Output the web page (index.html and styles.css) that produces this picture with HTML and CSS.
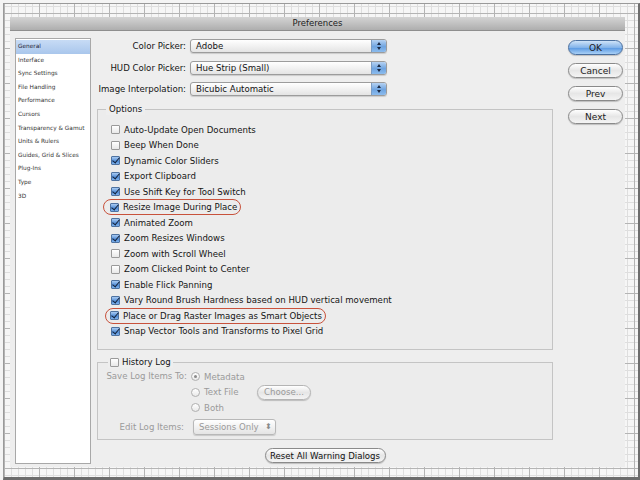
FILE: index.html
```html
<!DOCTYPE html>
<html>
<head>
<meta charset="utf-8">
<link rel="stylesheet" href="styles.css">
</head>
<body>
<div class="frame">
  <div class="dialog">
    <div class="titlebar">Preferences</div>
    <div class="body">
      <ul class="sidebar">
        <li class="sel">General</li>
        <li>Interface</li>
        <li>Sync Settings</li>
        <li>File Handling</li>
        <li>Performance</li>
        <li>Cursors</li>
        <li>Transparency &amp; Gamut</li>
        <li>Units &amp; Rulers</li>
        <li>Guides, Grid &amp; Slices</li>
        <li>Plug-Ins</li>
        <li>Type</li>
        <li>3D</li>
      </ul>
      <div class="main">
        <div class="pickers">
          <div class="prow"><span class="plabel">Color Picker:</span><span class="select">Adobe<span class="stepper"></span></span></div>
          <div class="prow"><span class="plabel">HUD Color Picker:</span><span class="select">Hue Strip (Small)<span class="stepper"></span></span></div>
          <div class="prow"><span class="plabel">Image Interpolation:</span><span class="select">Bicubic Automatic<span class="stepper"></span></span></div>
        </div>
        <div class="group options">
          <div class="legend">Options</div>
          <div class="crow"><span class="cb"></span>Auto-Update Open Documents</div>
          <div class="crow"><span class="cb"></span>Beep When Done</div>
          <div class="crow"><span class="cb on"></span>Dynamic Color Sliders</div>
          <div class="crow"><span class="cb on"></span>Export Clipboard</div>
          <div class="crow"><span class="cb on"></span>Use Shift Key for Tool Switch</div>
          <div class="crow"><span class="hl"><span class="cb on"></span>Resize Image During Place</span></div>
          <div class="crow"><span class="cb on"></span>Animated Zoom</div>
          <div class="crow"><span class="cb on"></span>Zoom Resizes Windows</div>
          <div class="crow"><span class="cb"></span>Zoom with Scroll Wheel</div>
          <div class="crow"><span class="cb"></span>Zoom Clicked Point to Center</div>
          <div class="crow"><span class="cb on"></span>Enable Flick Panning</div>
          <div class="crow"><span class="cb on"></span>Vary Round Brush Hardness based on HUD vertical movement</div>
          <div class="crow"><span class="hl hl2"><span class="cb on"></span>Place or Drag Raster Images as Smart Objects</span></div>
          <div class="crow"><span class="cb on"></span>Snap Vector Tools and Transforms to Pixel Grid</div>
        </div>
        <div class="group history">
          <div class="legend hlegend"><span class="cb"></span>History Log</div>
          <div class="hgrid">
            <span class="hlabel">Save Log Items To:</span>
            <div class="radios">
              <div class="rrow"><span class="radio on"></span>Metadata</div>
              <div class="rrow"><span class="radio"></span><span class="rtext">Text File</span><span class="btn small">Choose...</span></div>
              <div class="rrow"><span class="radio"></span>Both</div>
            </div>
            <span class="hlabel elabel">Edit Log Items:</span>
            <div class="erow"><span class="select dis">Sessions Only<span class="dstep">&#x2B0D;</span></span></div>
          </div>
        </div>
        <div class="reset-row"><span class="btn reset">Reset All Warning Dialogs</span></div>
      </div>
      <div class="buttons">
        <span class="btn big ok">OK</span>
        <span class="btn big">Cancel</span>
        <span class="btn big">Prev</span>
        <span class="btn big">Next</span>
      </div>
    </div>
  </div>
</div>
</body>
</html>
```

FILE: styles.css
```css
html, body {
  margin: 0;
  padding: 0;
}
body {
  width: 640px;
  height: 480px;
  background: #f4f4f4;
  font-family: "DejaVu Sans", sans-serif;
  color: #141414;
  overflow: hidden;
}
.frame {
  margin: 3px 0 0 3px;
  width: 622px;
  height: 456px;
  padding: 13px 6px 4px 6px;
  border-left: 1px solid #9a9a9a;
  border-top: 1px solid #9a9a9a;
  border-right: 2px solid #6d6d6d;
  border-bottom: 3px solid #6d6d6d;
  background-color: #f6f6f6;
  background-image:
    linear-gradient(to right, #b4b4b4 1px, transparent 1px),
    linear-gradient(to bottom, #b4b4b4 1px, transparent 1px),
    linear-gradient(to right, #dedede 1px, transparent 1px),
    linear-gradient(to bottom, #dedede 1px, transparent 1px);
  background-size: 35px 35px, 35px 35px, 7px 7px, 7px 7px;
  background-position: 0 0, 0 9px, 0 0, 0 2px;
}
.dialog {
  width: 615px;
  height: 450px;
  background: #eeeeee;
  display: flex;
  flex-direction: column;
}
.titlebar {
  height: 13px;
  line-height: 13px;
  text-align: center;
  font-size: 8.5px;
  color: #222;
  background: linear-gradient(#d4d4d4, #aeaeae);
  border-bottom: 1px solid #8e8e8e;
}
.body {
  flex: 1;
  display: flex;
  padding: 7px 0 3px 5px;
}
.sidebar {
  list-style: none;
  margin: 0;
  padding: 1px 0 0 0;
  width: 74px;
  background: #fff;
  border: 1px solid #a8a8a8;
  font-size: 5.8px;
  color: #333;
}
.sidebar li {
  height: 13.6px;
  line-height: 13.6px;
  padding-left: 2px;
  white-space: nowrap;
}
.sidebar li.sel {
  background: linear-gradient(#c7dbf5, #a9c6ec);
  color: #223;
}
.main {
  width: 456px;
  margin-left: 6px;
  display: flex;
  flex-direction: column;
  font-size: 8.6px;
}
.pickers {
  display: flex;
  flex-direction: column;
  gap: 7.5px;
  padding-top: 1px;
}
.prow {
  display: flex;
  align-items: center;
  height: 14px;
}
.plabel {
  width: 89px;
  text-align: right;
  margin-right: 4px;
  white-space: nowrap;
}
.select {
  position: relative;
  width: 197px;
  height: 14px;
  box-sizing: border-box;
  line-height: 12px;
  padding-left: 5px;
  border: 1px solid #9c9c9c;
  border-radius: 3px;
  background: linear-gradient(#ffffff, #e4e4e4);
  box-shadow: 0 1px 1px rgba(0,0,0,0.15);
  white-space: nowrap;
}
.stepper {
  position: absolute;
  right: 0;
  top: 0;
  width: 14px;
  height: 12px;
  border-radius: 0 2px 2px 0;
  background: linear-gradient(#b6d2f2, #6fa4e0 55%, #8cbcee);
  border-left: 1px solid #7b9cc3;
}
.stepper::before,
.stepper::after {
  content: "";
  position: absolute;
  left: 5px;
  border-left: 2.5px solid transparent;
  border-right: 2.5px solid transparent;
}
.stepper::before {
  top: 2px;
  border-bottom: 3px solid #1c2b44;
}
.stepper::after {
  bottom: 2px;
  border-top: 3px solid #1c2b44;
}
.group {
  border: 1px solid #c4c4c4;
  background: #ececec;
  display: flex;
  flex-direction: column;
}
.options {
  margin-top: 13px;
  padding: 0 0 10px 13px;
}
.legend {
  align-self: flex-start;
  margin: -7px 0 7px -5px;
  padding: 0 3px;
  line-height: 12px;
  background: #eeeeee;
}
.crow {
  height: 15.5px;
  display: flex;
  align-items: center;
  white-space: nowrap;
}
.cb {
  width: 9px;
  height: 9px;
  box-sizing: border-box;
  border: 1px solid #9a9a9a;
  border-radius: 1px;
  background: linear-gradient(#ffffff, #e8e8e8);
  margin-right: 4px;
  position: relative;
  flex: none;
}
.cb.on {
  border-color: #4f73a1;
  background: linear-gradient(#a9cbf2, #4e8ad6 60%, #7fb2ec);
}
.cb.on::after {
  content: "";
  position: absolute;
  left: 2px;
  top: -1px;
  width: 3px;
  height: 6px;
  border-right: 1.6px solid #15233a;
  border-bottom: 1.6px solid #15233a;
  transform: rotate(40deg);
}
.hl {
  display: inline-flex;
  align-items: center;
  height: 16px;
  box-sizing: border-box;
  margin-left: -8px;
  padding: 0 3px 0 6px;
  border: 1.5px solid #c8523c;
  border-radius: 8px;
}
.hl2 {
  margin-left: -6px;
  padding-left: 4px;
}
.history {
  margin-top: 12px;
  height: 78px;
  box-sizing: border-box;
  padding: 0 0 0 6px;
}
.hlegend {
  display: flex;
  align-items: center;
  margin: -7px 0 1px 4px;
  padding: 0 2px;
  color: #141414;
}
.hlegend .cb {
  margin-right: 3px;
}
.hgrid {
  display: grid;
  grid-template-columns: 83px auto;
  column-gap: 4px;
  color: #9a9a9a;
}
.hlabel {
  text-align: right;
  line-height: 15.5px;
  white-space: nowrap;
}
.elabel {
  padding-right: 3px;
  line-height: 18px;
  margin-top: 2px;
}
.radios {
  display: flex;
  flex-direction: column;
}
.rrow {
  height: 15.5px;
  display: flex;
  align-items: center;
  white-space: nowrap;
}
.radio {
  width: 9px;
  height: 9px;
  box-sizing: border-box;
  border: 1px solid #b0b0b0;
  border-radius: 50%;
  background: linear-gradient(#fff, #e9e9e9);
  margin-right: 4px;
  position: relative;
}
.radio.on::after {
  content: "";
  position: absolute;
  left: 2px;
  top: 2px;
  width: 3px;
  height: 3px;
  border-radius: 50%;
  background: #8a8a8a;
}
.rtext {
  width: 53px;
}
.btn {
  display: inline-flex;
  align-items: center;
  justify-content: center;
  box-sizing: border-box;
  border: 1px solid #8a8a8a;
  border-radius: 8px;
  background: linear-gradient(#ffffff, #e6e6e6 50%, #f4f4f4);
  box-shadow: 0 1px 1px rgba(0,0,0,0.2);
  white-space: nowrap;
}
.small {
  width: 54px;
  height: 15px;
  color: #9a9a9a;
  border-color: #b4b4b4;
}
.erow {
  margin-top: 2px;
  padding-left: 2px;
  height: 18px;
  display: flex;
  align-items: center;
}
.select.dis {
  width: 83px;
  height: 16px;
  line-height: 14px;
  color: #9a9a9a;
  border-color: #b8b8b8;
}
.dstep {
  position: absolute;
  right: 3px;
  top: 0;
  font-size: 8px;
  color: #8a8a8a;
}
.reset-row {
  display: flex;
  justify-content: center;
  margin-top: 8px;
}
.reset {
  width: 121px;
  height: 15px;
  color: #111;
}
.buttons {
  margin-left: 15px;
  margin-top: 2px;
  display: flex;
  flex-direction: column;
  gap: 8px;
  font-size: 9px;
}
.big {
  width: 55px;
  height: 15px;
  color: #222;
}
.ok {
  border-color: #4a6f9e;
  background: linear-gradient(#cfe3f8, #84b4ea 50%, #5d9be3 55%, #a9d0f6);
}
```
